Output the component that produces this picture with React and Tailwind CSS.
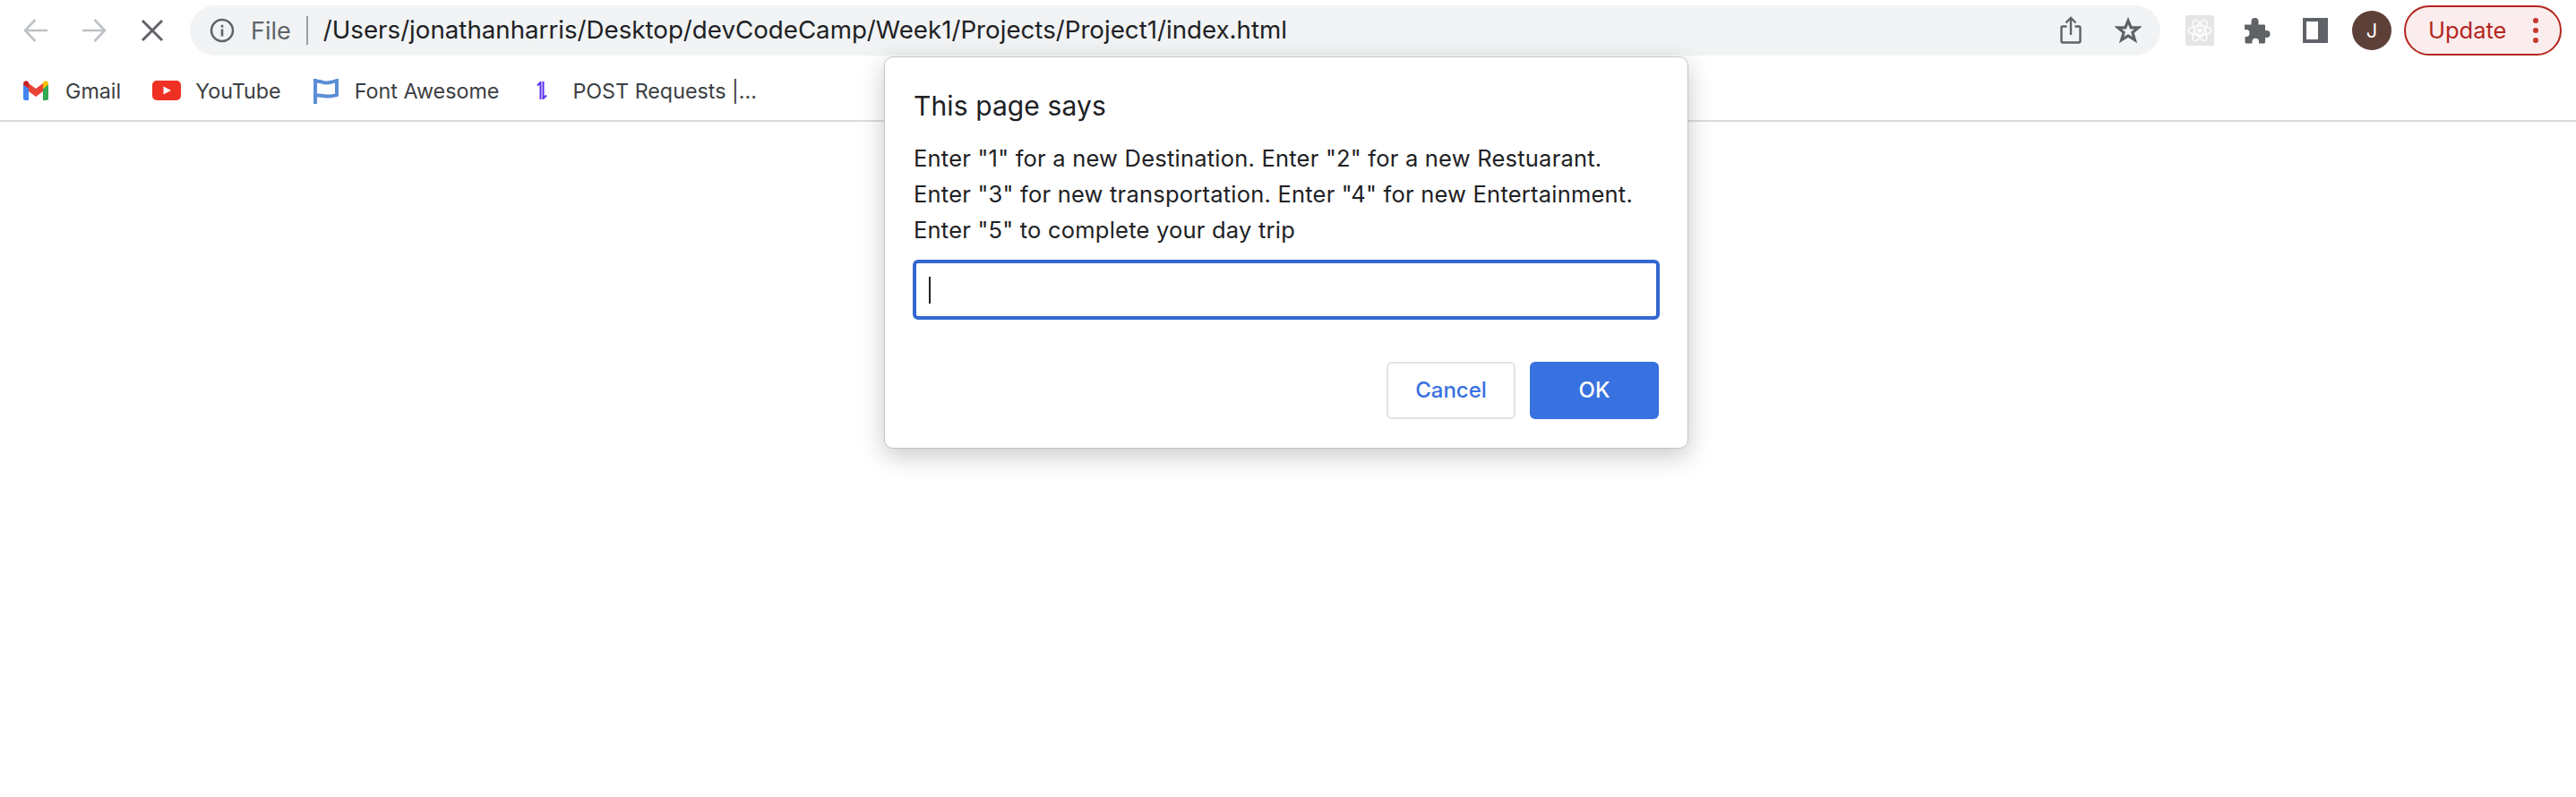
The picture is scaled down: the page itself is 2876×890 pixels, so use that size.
import React from "react";

const Back = () => (
  <svg width="28" height="28" viewBox="0 0 28 28" fill="none" stroke="#bdc1c6" strokeWidth="2.6">
    <path d="M27 14H2M13.5 2 2 14l11.5 12" />
  </svg>
);
const Forward = () => (
  <svg width="28" height="28" viewBox="0 0 28 28" fill="none" stroke="#bdc1c6" strokeWidth="2.6">
    <path d="M1 14h25M14.5 2 26 14 14.5 26" />
  </svg>
);
const Close = () => (
  <svg width="26" height="26" viewBox="0 0 26 26" fill="none" stroke="#5f6368" strokeWidth="3">
    <path d="M2 2l22 22M24 2 2 24" />
  </svg>
);
const Info = () => (
  <svg width="28" height="28" viewBox="0 0 28 28" fill="none">
    <circle cx="14" cy="14" r="12" stroke="#5f6368" strokeWidth="2.5" />
    <rect x="12.7" y="12.5" width="2.6" height="8" fill="#5f6368" />
    <rect x="12.7" y="7.8" width="2.6" height="2.8" fill="#5f6368" />
  </svg>
);
const Share = () => (
  <svg width="24" height="32" viewBox="0 0 24 32" fill="none" stroke="#5f6368" strokeWidth="2.4">
    <path d="M12 21V2M6.500 7.500 12 2l5.500 5.500" />
    <path d="M7.500 11.500H3a1.500 1.500 0 0 0-1.500 1.500v15A1.500 1.500 0 0 0 3 29.500h18a1.500 1.500 0 0 0 1.500-1.500V13a1.500 1.500 0 0 0-1.500-1.500h-4.500" />
  </svg>
);
const Star = () => (
  <svg width="30" height="30" viewBox="0 0 30 30" fill="none" stroke="#5f6368" strokeWidth="3.200" strokeLinejoin="miter">
    <path d="M15 4l3.200 7.800h8.400l-6.700 5.400 2.500 8.400L15 20.800l-7.400 4.800 2.500-8.400-6.700-5.400h8.400z" />
  </svg>
);
const ReactTile = () => (
  <div className="w-8 h-[34px] bg-[#e5e5e5] rounded-[2px] flex items-center justify-center">
    <svg width="30" height="30" viewBox="0 0 30 30" fill="none" stroke="#ffffff" strokeWidth="1.400">
      <ellipse cx="15" cy="15" rx="13" ry="5.200" />
      <ellipse cx="15" cy="15" rx="13" ry="5.200" transform="rotate(60 15 15)" />
      <ellipse cx="15" cy="15" rx="13" ry="5.200" transform="rotate(120 15 15)" />
      <circle cx="15" cy="15" r="2.600" fill="#ffffff" stroke="none" />
    </svg>
  </div>
);
const Puzzle = () => (
  <svg width="30" height="30" viewBox="0 0 30 30" fill="#5f6368">
    <path d="M1 8.500h7.500V5a4 4 0 0 1 8 0v3.500H23a1.500 1.500 0 0 1 1 1v5.500h1.500a4 4 0 0 1 0 8H24v5a1.500 1.500 0 0 1-1 1.500h-6v-2a3.800 3.800 0 0 0-7.600 0v2H3a1.500 1.500 0 0 1-1.500-1.500V22h1a4 4 0 0 0 0-8h-1.500z" />
  </svg>
);
const Panel = () => (
  <svg width="28" height="28" viewBox="0 0 28 28" fill="#5f6368">
    <path fillRule="evenodd" d="M0 0h28v28H0zM4 4v20h13V4z" />
  </svg>
);
const GmailIcon = () => (
  <svg width="28" height="22" viewBox="0 0 28 22">
    <path d="M0 4v16a2 2 0 0 0 2 2h4V9z" fill="#4285f4" />
    <path d="M28 4v16a2 2 0 0 1-2 2h-4V9z" fill="#34a853" />
    <path d="M6 3v9l8 6 8-6V3l-8 6z" fill="#ea4335" />
    <path d="M0 3.500C0 .8 3 -.7 5 1l1 1v7L0 4.500z" fill="#c5221f" />
    <path d="M28 3.500c0-2.700-3-4.200-5-2.500l-1 1v7l6-4.500z" fill="#fbbc04" />
  </svg>
);
const YouTubeIcon = () => (
  <svg width="32" height="22" viewBox="0 0 32 22">
    <rect width="32" height="22" rx="5" fill="#ee3124" />
    <path d="M12.500 6.500v9l8.500-4.500z" fill="#ffffff" />
  </svg>
);
const FlagIcon = () => (
  <svg width="28" height="28" viewBox="0 0 28 28" fill="none" stroke="#5b8ed6" strokeWidth="4">
    <path d="M2 0v28" />
    <path d="M2 3c5-1.500 8 1.500 12 1.500 4 0 7-1 12-2.500v16c-4 1-7 2-12 1.500-4-.5-8-2-12-.5" />
  </svg>
);
const PostIcon = () => (
  <svg width="12" height="20" viewBox="0 0 12 20" fill="none" stroke="#5a2ff0" strokeWidth="2">
    <path d="M4.500 20V1L1 4.500M7.500 0v19l3.500-3.500" />
  </svg>
);

const Bookmark = ({ icon, label, iconBox, gap, ml }) => (
  <div className={`flex items-center ${ml}`}>
    <div className={`flex justify-center ${iconBox} ${gap}`}>{icon}</div>
    <span className="text-[23.3px] text-[#3c4043] leading-none">{label}</span>
  </div>
);

export default function App() {
  return (
    <div className="relative w-[2876px] h-[890px] bg-white overflow-hidden font-['Inter','Liberation_Sans',sans-serif]">
      <header className="h-[68px] flex items-center pl-[26px]">
        <Back />
        <div className="ml-[37px]"><Forward /></div>
        <div className="ml-[38px]"><Close /></div>
        <div className="ml-[29px] w-[2200px] h-14 rounded-full bg-[#f1f3f4] flex items-center pl-[22px]">
          <Info />
          <span className="ml-[18px] text-[27px] text-[#5f6368] leading-none">File</span>
          <div className="ml-[17px] w-[2px] h-8 bg-[#9aa0a6]" />
          <span className="ml-[17px] text-[27.7px] text-[#202124] leading-none whitespace-nowrap">
            /Users/jonathanharris/Desktop/devCodeCamp/Week1/Projects/Project1/index.html
          </span>
          <div className="ml-auto mr-[21px] flex items-center gap-[37px]">
            <Share />
            <Star />
          </div>
        </div>
        <div className="ml-[28px]"><ReactTile /></div>
        <div className="ml-[33px]"><Puzzle /></div>
        <div className="ml-[36px]"><Panel /></div>
        <div className="ml-[27px] w-11 h-11 rounded-full bg-[#5d4037] flex items-center justify-center text-white text-[22px]">J</div>
        <div className="ml-[14px] w-[176px] h-14 rounded-full border-[2px] border-[#b3261e] bg-[#fbeced] flex items-center pl-[25px]">
          <span className="text-[25.5px] text-[#b3261e] leading-none">Update</span>
          <div className="ml-[30px] flex flex-col gap-[5px]">
            <div className="w-[6px] h-[6px] rounded-full bg-[#c5392f]" />
            <div className="w-[6px] h-[6px] rounded-full bg-[#c5392f]" />
            <div className="w-[6px] h-[6px] rounded-full bg-[#c5392f]" />
          </div>
        </div>
      </header>
      <nav className="h-[68px] pt-[1px] border-b-2 border-[#dadce0] flex items-center pl-[26px]">
        <Bookmark icon={<GmailIcon />} label="Gmail" iconBox="w-7" gap="mr-[19px]" ml="" />
        <Bookmark icon={<YouTubeIcon />} label="YouTube" iconBox="w-8" gap="mr-[16px]" ml="ml-[35px]" />
        <Bookmark icon={<FlagIcon />} label="Font Awesome" iconBox="w-7" gap="mr-[18px]" ml="ml-[36px]" />
        <Bookmark icon={<PostIcon />} label="POST Requests |..." iconBox="w-3" gap="mr-[28px]" ml="ml-[42px]" />
      </nav>
      <div className="absolute left-[987px] top-[63px] w-[898px] h-[438px] bg-white rounded-[10px] border border-[#c4c4c4] shadow-[0_8px_28px_rgba(0,0,0,0.22)] pt-[32px] pl-[31px] pr-[31px]">
        <h1 className="pl-px text-[30px] leading-[44px] text-[#202124] font-normal tracking-[0.1px]">This page says</h1>
        <div className="mt-[17px] pl-px text-[25.5px] leading-[40px] text-[#202124] tracking-[0.22px] whitespace-nowrap">
          <p>Enter "1" for a new Destination. Enter "2" for a new Restuarant.</p>
          <p>Enter "3" for new transportation. Enter "4" for new Entertainment.</p>
          <p>Enter "5" to complete your day trip</p>
        </div>
        <div className="mt-[13px] h-[67px] w-[834px] rounded-[6px] border-[4px] border-[#3367d1] flex items-center pl-[14px]">
          <div className="w-[2px] h-[30px] bg-[#202124]" />
        </div>
        <div className="mt-[47px] flex justify-end gap-4 pr-px">
          <button className="w-[144px] h-16 rounded-[6px] border-2 border-[#e3e3e3] bg-white text-[#3871e0] text-[24px] font-medium">Cancel</button>
          <button className="w-[144px] h-16 rounded-[6px] bg-[#3871e0] text-white text-[24px] font-medium">OK</button>
        </div>
      </div>
    </div>
  );
}
